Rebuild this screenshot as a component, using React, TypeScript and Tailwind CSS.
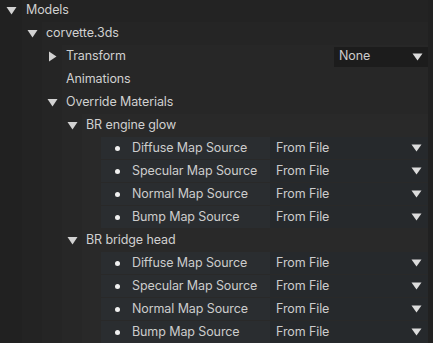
import React from "react";

type TreeNode = {
  label: string;
  open?: boolean;
  leaf?: boolean;
  select?: string;
  children?: TreeNode[];
  props?: string[];
};

const mapSources = ["Diffuse Map Source", "Specular Map Source", "Normal Map Source", "Bump Map Source"];

const tree: TreeNode = {
  label: "Models",
  open: true,
  children: [
    {
      label: "corvette.3ds",
      open: true,
      children: [
        { label: "Transform", open: false, select: "None" },
        { label: "Animations", leaf: true },
        {
          label: "Override Materials",
          open: true,
          children: [
            { label: "BR engine glow", open: true, props: mapSources },
            { label: "BR bridge head", open: true, props: mapSources },
          ],
        },
      ],
    },
  ],
};

function Caret({ open }: { open: boolean }) {
  return open ? (
    <svg width="11" height="9" viewBox="0 0 11 9">
      <path d="M0.5 1 L10.5 1 L5.5 8.5 Z" fill="#d2d2d2" />
    </svg>
  ) : (
    <svg width="9" height="11" viewBox="0 0 9 11">
      <path d="M1 0.5 L8.5 5.5 L1 10.5 Z" fill="#d2d2d2" />
    </svg>
  );
}

function DropArrow() {
  return (
    <svg width="11" height="8" viewBox="0 0 11 8">
      <path d="M0.5 0.5 L10.5 0.5 L5.5 7.5 Z" fill="#dcdcdc" />
    </svg>
  );
}

function PropRow({ label }: { label: string }) {
  return (
    <div className="flex h-[22px] items-center bg-[#2a2d30] mb-px">
      <div className="w-[31px] flex justify-center pl-[1px]">
        <div className="w-[5px] h-[5px] rounded-full bg-[#f0f0f0]" />
      </div>
      <div className="w-[138px] text-[#cccccc]">{label}</div>
      <div className="flex-1 h-full flex items-center justify-between bg-[#26292c] pl-[6px] pr-[6px]">
        <span className="text-[#cccccc]">From File</span>
        <DropArrow />
      </div>
    </div>
  );
}

function Node({ node, first }: { node: TreeNode; first?: boolean }) {
  return (
    <div className="flex">
      <div className={`${first ? "w-[22px]" : "w-[20px]"} h-[23px] flex items-center justify-center shrink-0`}>
        {!node.leaf && <Caret open={!!node.open} />}
      </div>
      <div className="flex-1 bg-white/[0.012]">
        <div className="h-[23px] flex items-center pl-[4px]">
          <span className="text-[#d0d0d0] flex-1">{node.label}</span>
          {node.select && (
            <div className="w-[94px] h-[20px] bg-[#1c1c1c] flex items-center justify-between pl-[5px] pr-[5px]">
              <span className="text-[#cccccc]">{node.select}</span>
              <DropArrow />
            </div>
          )}
        </div>
        {node.open && node.children && node.children.map((c) => <Node key={c.label} node={c} />)}
        {node.open && node.props && (
          <div className="pl-[19px]">
            {node.props.map((p) => (
              <PropRow key={p} label={p} />
            ))}
          </div>
        )}
      </div>
    </div>
  );
}

export default function App() {
  return (
    <div
      className="w-[433px] h-[343px] overflow-hidden bg-[#212121] antialiased text-[12.5px] tracking-[-0.1px]"
      style={{ fontFamily: "Inter, 'Noto Sans', sans-serif" }}
    >
      <div className="-mt-[1px] pr-[5px]">
        <Node node={tree} first />
      </div>
    </div>
  );
}
